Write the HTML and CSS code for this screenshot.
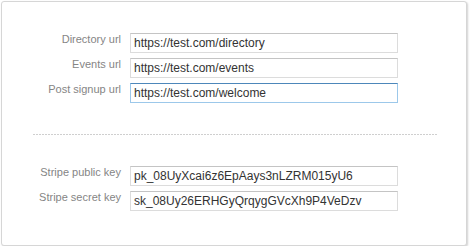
FILE: index.html
```html
<!DOCTYPE html>
<html>
<head>
<meta charset="utf-8">
<link rel="stylesheet" href="styles.css">
</head>
<body>
<div class="card">
  <div class="section section-urls">
    <label class="label">Directory url</label>
    <div class="input">https://test.com/directory</div>
    <label class="label">Events url</label>
    <div class="input">https://test.com/events</div>
    <label class="label">Post signup url</label>
    <div class="input input-focus">https://test.com/welcome</div>
  </div>
  <div class="divider"></div>
  <div class="section section-keys">
    <label class="label">Stripe public key</label>
    <div class="input">pk_08UyXcai6z6EpAays3nLZRM015yU6</div>
    <label class="label">Stripe secret key</label>
    <div class="input">sk_08Uy26ERHGyQrqygGVcXh9P4VeDzv</div>
  </div>
</div>
</body>
</html>
```
FILE: styles.css
```css
html, body {
  margin: 0;
  padding: 0;
  background: #ffffff;
}
body {
  font-family: "Liberation Sans", Arial, sans-serif;
}
.card {
  margin: 1px 0 0 1px;
  width: 464px;
  height: 243px;
  border: 1px solid #d6d6d6;
  border-radius: 3px;
  box-shadow: 1px 1px 2px rgba(0, 0, 0, 0.18);
  background: #fff;
  display: flex;
  flex-direction: column;
}
.section {
  display: grid;
  grid-template-columns: 119px 268px;
  column-gap: 9px;
  row-gap: 5px;
  align-items: start;
}
.section-urls {
  padding-top: 31px;
}
.divider {
  margin: 31px 29px 0 31px;
  height: 1px;
  background: repeating-linear-gradient(to right, #cfcfcf 0, #cfcfcf 2px, transparent 2px, transparent 3px);
}
.section-keys {
  padding-top: 31px;
}
.label {
  text-align: right;
  font-size: 11px;
  line-height: 13px;
  color: #858585;
  padding-top: 0;
  white-space: nowrap;
}
.input {
  box-sizing: border-box;
  height: 20px;
  border: 1px solid #dcdcdc;
  border-top-color: #c4c4c4;
  padding: 0 3px;
  font-size: 12px;
  line-height: 18px;
  color: #333;
  white-space: nowrap;
  overflow: hidden;
}
.input-focus {
  border-color: #9cc8ea;
  border-top-color: #4d87ba;
}
```
